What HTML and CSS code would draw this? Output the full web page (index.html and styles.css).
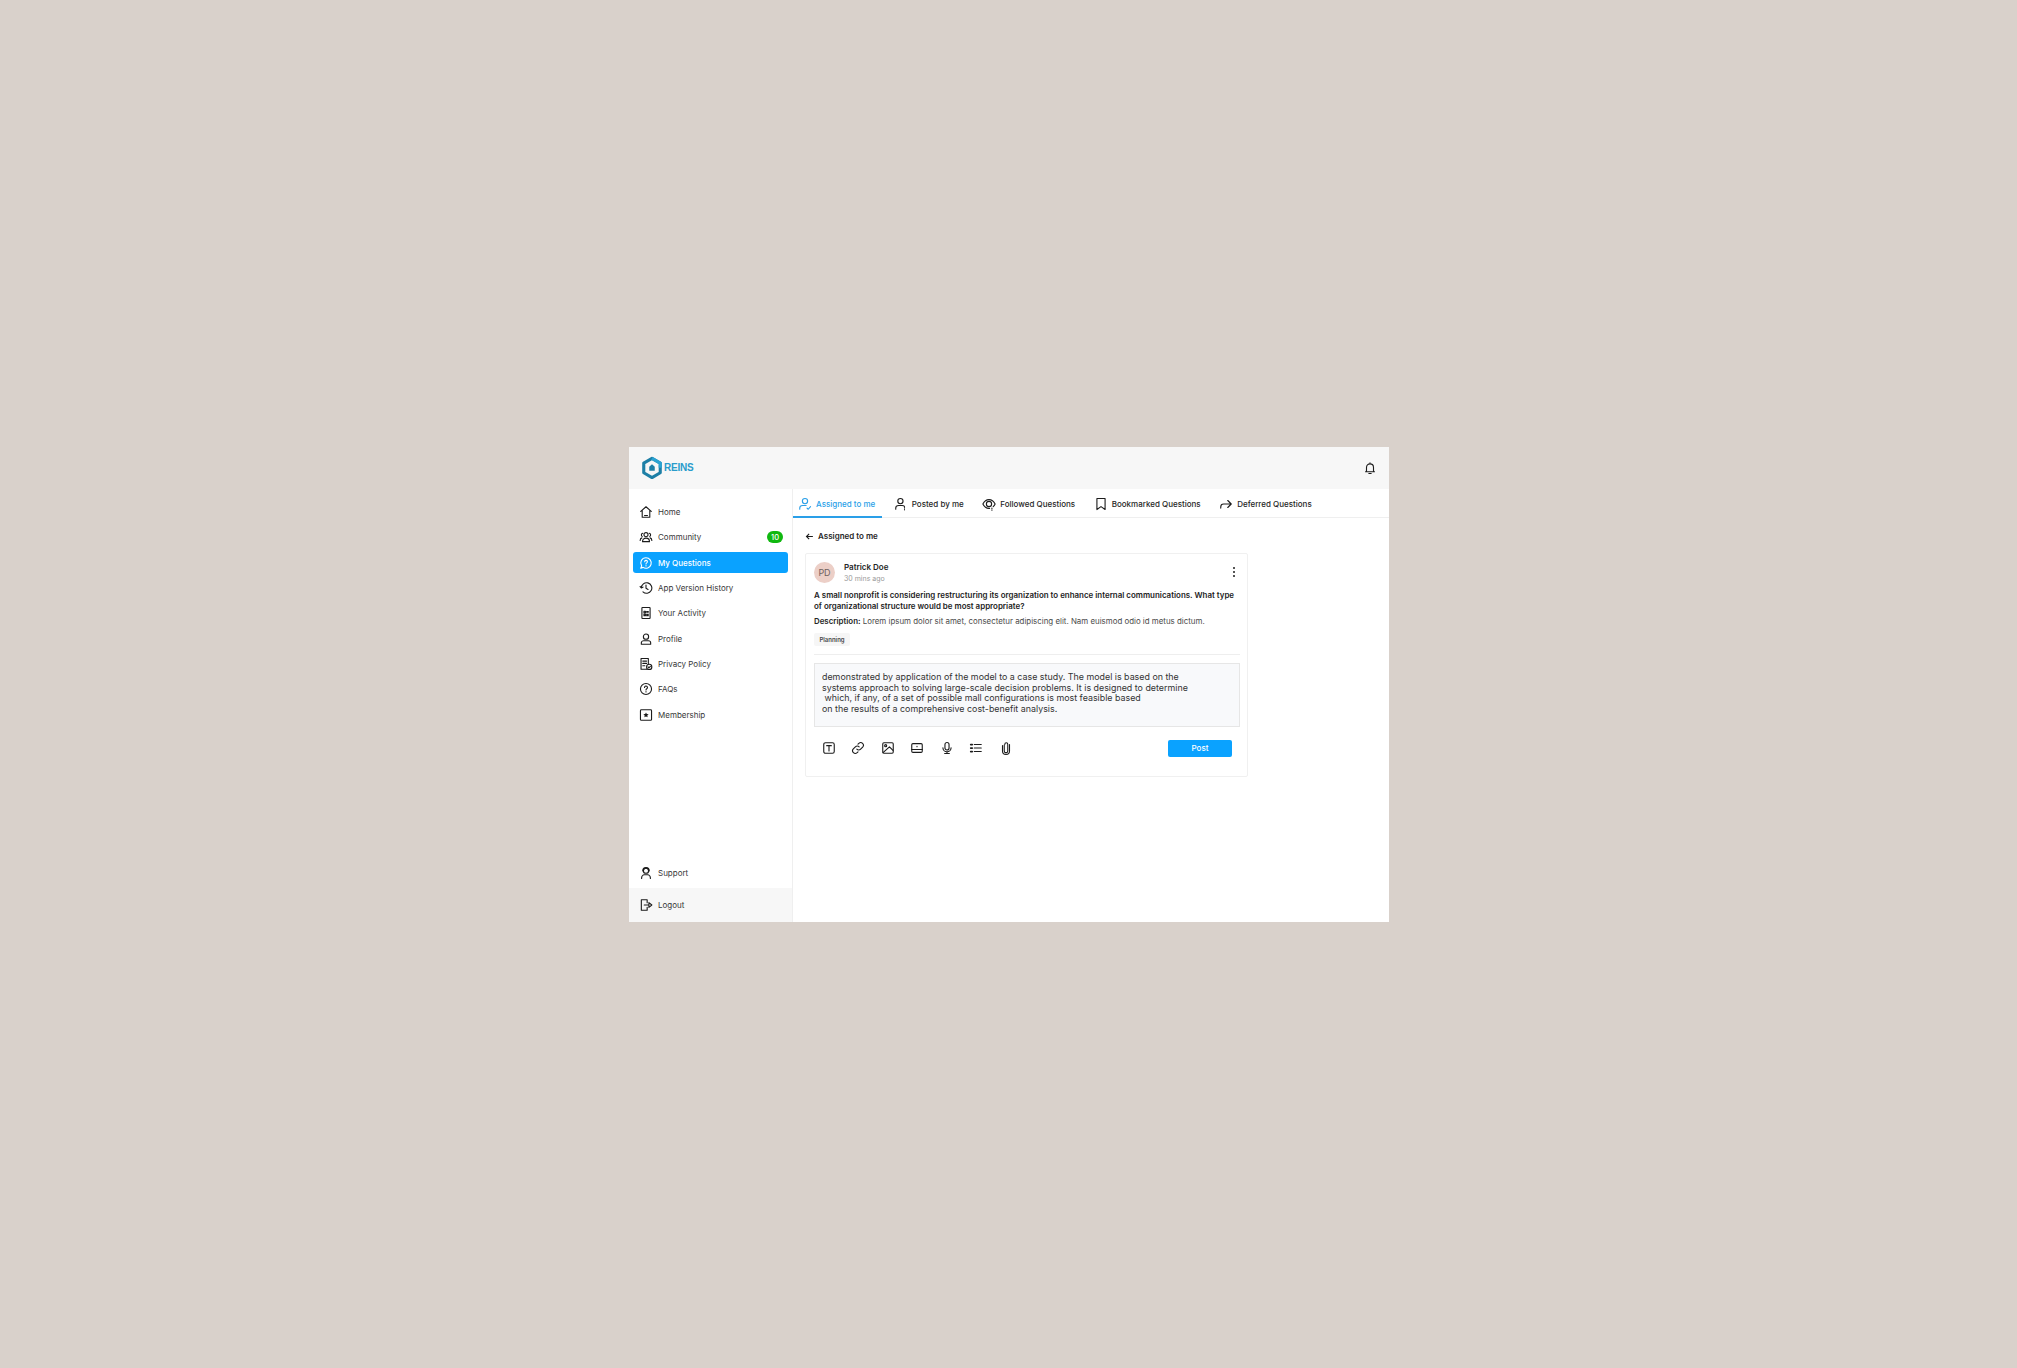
FILE: index.html
```html
<!DOCTYPE html>
<html lang="en">
<head>
<meta charset="utf-8">
<title>REINS</title>
<link rel="stylesheet" href="styles.css">
</head>
<body>
<div class="app">
  <header class="topbar">
    <div class="logo">
      <svg class="logo-mark" viewBox="0 0 24 26"><path d="M12 2.500 21 7.600v10.600l-9 5.200-9-5.200V7.600z" fill="none" stroke="#1d7fa6" stroke-width="3.400" stroke-linejoin="round"/><path d="M12 2.500 21 7.600v5" fill="none" stroke="#2aa3d3" stroke-width="3.400"/><path d="M12 9l3 2.600V16H9v-4.400z" fill="#1d7fa6"/></svg>
      <span class="logo-text">REINS</span>
    </div>
    <svg class="icon bell" viewBox="0 0 24 24"><path d="M6 17V11a6 6 0 0 1 12 0v6l1.500 1.500h-15zM12 3v2M10 21.500h4"/></svg>
  </header>
  <div class="body">
    <aside class="sidebar">
      <nav class="nav">
        <a class="nav-item"><svg class="icon" viewBox="0 0 24 24"><path d="M3 11 12 3l9 8M5.500 9.500V21h13V9.500M9.500 18h5"/></svg><span>Home</span></a>
        <a class="nav-item"><svg class="icon" viewBox="0 0 24 24"><circle cx="12" cy="8" r="3.500"/><path d="M6 20c0-4 2.500-6 6-6s6 2 6 6zM6.500 5.500a3 3 0 0 0-1 5.500M17.500 5.500a3 3 0 0 1 1 5.500M2 18c0-2.500 1-4 3-4.500M22 18c0-2.500-1-4-3-4.500"/></svg><span>Community</span><b class="badge">10</b></a>
        <a class="nav-item active"><svg class="icon" viewBox="0 0 24 24"><path d="M12 3a9 9 0 1 1-5 16.500L3 21l1.500-4A9 9 0 0 1 12 3zM9.800 9.800a2.300 2.300 0 1 1 3.400 2c-.8.500-1.200 1-1.200 1.900M12 16.500v.5"/></svg><span>My Questions</span></a>
        <a class="nav-item"><svg class="icon" viewBox="0 0 24 24"><path d="M4 12a9 9 0 1 1 2.800 6.500M4 12 2 9.500M4 12l3-1.500M12 7v5.500l3.500 2"/></svg><span>App Version History</span></a>
        <a class="nav-item"><svg class="icon" viewBox="0 0 24 24"><rect x="5" y="2.500" width="14" height="19" rx="1"/><path d="M8.500 9h2.500v2.500H8.500zM8.500 14h2.500v2.500H8.500zM13 9.500h3M13 11.500h3M13 14.500h3M13 16.500h3"/></svg><span>Your Activity</span></a>
        <a class="nav-item"><svg class="icon" viewBox="0 0 24 24"><circle cx="12" cy="8" r="4.500"/><path d="M4 21v-2.500c0-2 2-3.500 4-3.500h8c2 0 4 1.500 4 3.500V21z"/></svg><span>Profile</span></a>
        <a class="nav-item"><svg class="icon" viewBox="0 0 24 24"><path d="M13 21H3.500V2.500H16V11M6.500 7H13M6.500 11H13M6.500 15H10"/><circle cx="17.500" cy="17" r="4.500"/><path d="m15.500 17 1.500 1.500 2.500-2.500"/></svg><span>Privacy Policy</span></a>
        <a class="nav-item"><svg class="icon" viewBox="0 0 24 24"><circle cx="12" cy="12" r="9.500"/><path d="M9.500 9.500a2.500 2.500 0 1 1 3.800 2.100c-.9.600-1.300 1-1.300 2M12 16.500v.5"/></svg><span>FAQs</span></a>
        <a class="nav-item"><svg class="icon" viewBox="0 0 24 24"><rect x="2.500" y="3" width="19" height="18" rx="1.500"/><path class="fill" d="m12 7.500 1.400 2.900 3.100.4-2.300 2.100.6 3.100-2.800-1.500-2.800 1.500.6-3.100-2.300-2.100 3.100-.4z"/></svg><span>Membership</span></a>
      </nav>
      <a class="nav-item support"><svg class="icon" viewBox="0 0 24 24"><circle cx="12" cy="8" r="4.500"/><path class="thick" d="M7 8a5 5 0 0 1 10 0"/><path d="M4.500 21.500V20c0-3 2.500-5 4.500-5h6c2 0 4.500 2 4.500 5v1.500"/></svg><span>Support</span></a>
      <a class="logout"><svg class="icon" viewBox="0 0 24 24"><path d="M14 8V3H4v18h10v-5M9 12h8V8l5 4-5 4v-4"/></svg><span>Logout</span></a>
    </aside>
    <main class="main">
      <div class="tabs">
        <a class="tab active"><svg class="icon" viewBox="0 0 24 24"><circle cx="12" cy="7" r="4.500"/><path d="M3 21v-2c0-3 2.500-4.500 5-4.500h6M15.500 19l2 2 4-4.500"/></svg><span>Assigned to me</span></a>
        <a class="tab"><svg class="icon" viewBox="0 0 24 24"><circle cx="11" cy="7" r="4.500"/><path d="M3 21v-2c0-3 2.500-4.500 5-4.500h6c2 0 3 .5 4 1.500M18 18v1M18 21.500v.5"/></svg><span>Posted by me</span></a>
        <a class="tab"><svg class="icon" viewBox="0 0 24 24"><path d="M1.500 12C4 7 8 4.500 12 4.500S20 7 22.500 12c-.8 1.700-2 3.200-3.300 4.500M13 19.500c-5 .5-9-2.500-11.500-7.500"/><circle cx="12" cy="12" r="4.500"/><path d="M17 19v.5M17 22v.5"/></svg><span>Followed Questions</span></a>
        <a class="tab"><svg class="icon" viewBox="0 0 24 24"><path d="M5 2.500h14v19l-7-5-7 5z"/></svg><span>Bookmarked Questions</span></a>
        <a class="tab"><svg class="icon" viewBox="0 0 24 24"><path d="M3 19v-2c0-3 2-5 5-5h13M15 6l6 6-6 6"/></svg><span>Deferred Questions</span></a>
      </div>
      <div class="content">
        <div class="back"><svg class="back-arrow" viewBox="0 0 24 24"><path d="M21 12H4M11 5l-7 7 7 7"/></svg><span>Assigned to me</span></div>
        <article class="card">
          <div class="author">
            <div class="avatar">PD</div>
            <div class="author-meta">
              <div class="name">Patrick Doe</div>
              <div class="time">30 mins ago</div>
            </div>
            <div class="kebab"><i></i><i></i><i></i></div>
          </div>
          <h2 class="question">A small nonprofit is considering restructuring its organization to enhance internal communications. What type of organizational structure would be most appropriate?</h2>
          <p class="description"><b>Description:</b> Lorem ipsum dolor sit amet, consectetur adipiscing elit. Nam euismod odio id metus dictum.</p>
          <span class="tag">Planning</span>
          <hr class="divider">
          <div class="answer">demonstrated by application of the model to a case study. The model is based on the<br>systems approach to solving large-scale decision problems. It is designed to determine<br>&nbsp;which, if any, of a set of possible mall configurations is most feasible based<br>on the results of a comprehensive cost-benefit analysis.</div>
          <div class="toolbar">
            <div class="tools">
              <svg class="icon" viewBox="0 0 24 24"><rect x="3" y="3" width="18" height="18" rx="3"/><path d="M8 8h8M12 8v9"/></svg>
              <svg class="icon" viewBox="0 0 24 24"><path d="M10 14a4.500 4.500 0 0 0 6.500 0l3.500-3.500a4.600 4.600 0 0 0-6.500-6.500l-1.500 1.500M14 10a4.500 4.500 0 0 0-6.500 0L4 13.500A4.600 4.600 0 0 0 10.500 20l1.500-1.500"/></svg>
              <svg class="icon" viewBox="0 0 24 24"><rect x="3" y="3" width="18" height="18" rx="2"/><circle cx="8" cy="8" r="1.800"/><path d="m3.500 20 11-10 6 6"/></svg>
              <svg class="icon" viewBox="0 0 24 24"><rect x="3" y="4.500" width="18" height="15" rx="2"/><path d="M3 14.500h18M12 9v.8"/></svg>
              <svg class="icon" viewBox="0 0 24 24"><rect x="8.500" y="2.500" width="7" height="13" rx="3.500"/><path d="M5 11.500a7 7 0 0 0 14 0M12 18.500V21M8 21.500h8"/></svg>
              <svg class="icon" viewBox="0 0 24 24"><path class="thick" d="M3 6h2.500M3 12h2.500M3 18h2.500"/><path d="M9 6h12M9 12h12M9 18h12"/></svg>
              <svg class="icon" viewBox="0 0 24 24"><path d="M9 7v10a3 3 0 0 0 6 0V5.500a2.500 2.500 0 0 0-5 0M6 8v9a6 6 0 0 0 12 0V6"/></svg>
            </div>
            <button class="post" type="button">Post</button>
          </div>
        </article>
      </div>
    </main>
  </div>
</div>
</body>
</html>
```

FILE: styles.css
```css
* { box-sizing: border-box; }
html, body { height: 100%; }
body {
  margin: 0;
  background: #d9d1cb;
  display: flex;
  align-items: center;
  justify-content: center;
  font-family: Inter, "Open Sans", "Liberation Sans", sans-serif;
  color: #1c1c1c;
  font-size: 8px;
}
.app {
  width: 760px;
  height: 475px;
  background: #fff;
  display: flex;
  flex-direction: column;
  margin-left: 1px;
}
.icon {
  width: 14px;
  height: 14px;
  flex: none;
  fill: none;
  stroke: #1c1c1c;
  stroke-width: 1.900;
  stroke-linecap: round;
  stroke-linejoin: round;
}
.icon .fill { fill: #1c1c1c; stroke: none; }
.icon .thick { stroke-width: 3; }
.topbar {
  height: 42px;
  flex: none;
  background: #f7f7f7;
  display: flex;
  align-items: center;
  justify-content: space-between;
  padding: 0 12px;
}
.logo { display: flex; align-items: center; gap: 1px; }
.logo-mark { width: 22px; height: 24px; }
.logo-text {
  font-family: "Liberation Sans", sans-serif;
  font-weight: 700;
  font-size: 10px;
  letter-spacing: -.2px;
  color: #2a9ccb;
}
.bell { width: 14px; height: 14px; }
.body { flex: 1; display: flex; min-height: 0; }
.sidebar {
  width: 164px;
  flex: none;
  border-right: 1px solid #efefef;
  display: flex;
  flex-direction: column;
}
.nav {
  padding: 13px 4px 0;
  display: flex;
  flex-direction: column;
  gap: 4px;
}
.nav-item {
  height: 21.330px;
  display: flex;
  align-items: center;
  gap: 5px;
  padding: 0 6px;
  border-radius: 3px;
  color: #383838;
  font-size: 8px;
}
.nav-item.active { background: #0aa2ff; color: #fff; font-weight: 500; }
.nav-item.active .icon { stroke: #fff; }
.badge {
  margin-left: auto;
  margin-right: -1px;
  width: 16px;
  height: 12px;
  border-radius: 6px;
  background: #10b810;
  color: #fff;
  font-size: 7.500px;
  font-weight: 500;
  display: flex;
  align-items: center;
  justify-content: center;
}
.support { margin: auto 4px 4px; }
.logout {
  height: 34px;
  flex: none;
  background: #f7f7f7;
  display: flex;
  align-items: center;
  gap: 5px;
  padding: 0 10px;
  color: #383838;
}
.main { flex: 1; min-width: 0; display: flex; flex-direction: column; }
.tabs {
  height: 29px;
  flex: none;
  border-bottom: 1px solid #efefef;
  display: flex;
  gap: 6.500px;
}
.tab {
  height: 29px;
  display: flex;
  align-items: center;
  gap: 4px;
  padding: 1px 7px 0 5px;
  font-size: 8px;
  font-weight: 500;
  color: #262626;
}
.tab.active {
  color: #2a9fe8;
  border-bottom: 2px solid #2a9fe8;
  padding-top: 3px;
}
.tab.active .icon { stroke: #2a9fe8; }
.content { padding: 13px 0 0 12px; }
.back {
  display: flex;
  align-items: center;
  gap: 4px;
  height: 11px;
  font-size: 8px;
  font-weight: 600;
  color: #262626;
}
.back-arrow {
  width: 9px;
  height: 9px;
  fill: none;
  stroke: #1c1c1c;
  stroke-width: 3;
}
.card {
  width: 443px;
  height: 224px;
  margin-top: 11px;
  border: 1px solid #f0f0f0;
  border-radius: 2px;
  padding: 8px 7px 0 8px;
}
.author { display: flex; align-items: center; gap: 9px; height: 21px; }
.avatar {
  width: 21px;
  height: 21px;
  border-radius: 50%;
  background: #eccfc7;
  color: #6f625e;
  font-size: 9px;
  display: flex;
  align-items: center;
  justify-content: center;
}
.author-meta { flex: 1; }
.name { font-size: 8px; font-weight: 600; color: #262626; line-height: 11px; margin-top: 1px; }
.time { font-size: 7px; color: #9a9a9a; line-height: 11px; }
.kebab { display: flex; flex-direction: column; gap: 1.500px; margin-right: 5px; }
.kebab i { width: 2.500px; height: 2.500px; border-radius: 50%; background: #1c1c1c; }
.question {
  margin: 7px 0 0;
  font-size: 7.950px;
  line-height: 11px;
  font-weight: 600;
  color: #1c1c1c;
}
.description {
  margin: 4px 0 0;
  font-size: 7.900px;
  line-height: 11px;
  color: #4a4a4a;
  white-space: nowrap;
}
.description b { font-weight: 600; color: #262626; }
.tag {
  display: block;
  width: 36px;
  height: 13px;
  margin-top: 6px;
  background: #f6f6f6;
  border-radius: 2px;
  font-size: 6px;
  font-weight: 600;
  line-height: 13px;
  text-align: center;
  color: #4a4a4a;
}
.divider { border: 0; border-top: 1px solid #eeeeee; margin: 8px 0 0; }
.answer {
  height: 64px;
  margin-top: 8px;
  background: #f8f9fb;
  border: 1px solid #e6e6e6;
  padding: 8.750px 7px 0;
  font-size: 8.900px;
  line-height: 10.500px;
  color: #333;
  white-space: nowrap;
}
.toolbar {
  margin-top: 13px;
  display: flex;
  align-items: center;
  justify-content: space-between;
  padding: 0 8px 0 7.500px;
}
.tools { display: flex; gap: 15.500px; }
.post {
  width: 64px;
  height: 17px;
  border: 0;
  border-radius: 2px;
  background: #0aa2ff;
  color: #fff;
  font: 500 8px Inter, sans-serif;
  padding: 0;
}
```
